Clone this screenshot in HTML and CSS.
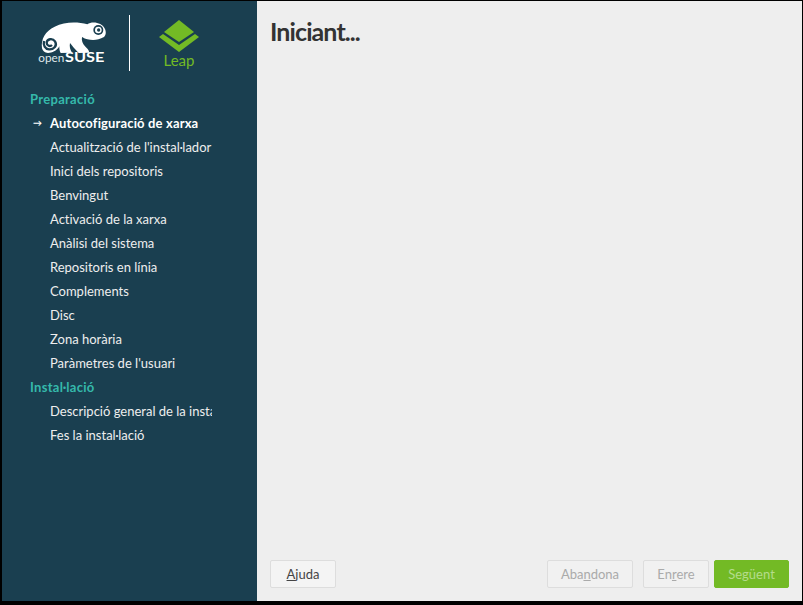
FILE: index.html
```html
<!DOCTYPE html>
<html lang="ca">
<head>
<meta charset="UTF-8">
<title>Iniciant...</title>
<link rel="stylesheet" href="styles.css">
</head>
<body>
<div class="window">
    <aside class="sidebar">
        <div class="logos">
            <svg class="logo-suse" width="90" height="60" viewBox="0 0 270 180">
                <path class="white" d="M36 100 C32 72 46 48 74 35 C104 20 142 20 172 28 C186 18 216 22 225 42 C230 55 226 62 222 66 C205 76 188 76 172 73 C164 71 160 68 156 66 C154 76 158 86 165 94 C171 100 176 104 178 113 L146 114 C134 102 126 92 120 84 C118 94 120 104 126 113 L92 114 C88 108 88 100 88 94 C80 108 66 114 54 114 C44 114 38 108 36 100 Z"/>
                <circle class="eye" cx="205" cy="45" r="15"/>
                <circle class="white" cx="205" cy="45" r="10"/>
                <circle class="eye" cx="206" cy="45" r="5"/>
                <path class="spiral" d="M66 90 C60 96 50 92 50 83 C51 71 68 69 75 79 C83 92 72 104 57 103 C45 102 39 91 42 78"/>
                <text class="open" x="25" y="141" textLength="78" lengthAdjust="spacingAndGlyphs">open</text>
                <text class="suse" x="105" y="141" textLength="118" lengthAdjust="spacingAndGlyphs">SUSE</text>
            </svg>
            <div class="divider"></div>
            <div class="leap">
                <svg width="42" height="33" viewBox="0 0 42 33">
                    <path class="green" d="M21 1 L36 13 L21 23 L6 13 Z"/>
                    <path class="green" d="M5 15 L21 26 L37 15 L41 18 L21 33 L1 18 Z"/>
                </svg>
                <div class="leap-name">Leap</div>
            </div>
        </div>
        <ul class="steps">
            <li class="group">Preparació</li>
            <li class="step current"><span class="arrow">→</span>Autocofiguració de xarxa</li>
            <li class="step">Actualització de l'instal·lador</li>
            <li class="step">Inici dels repositoris</li>
            <li class="step">Benvingut</li>
            <li class="step">Activació de la xarxa</li>
            <li class="step">Anàlisi del sistema</li>
            <li class="step">Repositoris en línia</li>
            <li class="step">Complements</li>
            <li class="step">Disc</li>
            <li class="step">Zona horària</li>
            <li class="step">Paràmetres de l'usuari</li>
            <li class="group">Instal·lació</li>
            <li class="step">Descripció general de la instal·lació</li>
            <li class="step">Fes la instal·lació</li>
        </ul>
    </aside>
    <main class="content">
        <h1 class="title">Iniciant...</h1>
        <div class="buttons">
            <button class="btn"><u>A</u>juda</button>
            <div class="spacer"></div>
            <button class="btn off abandon">Aba<u>n</u>dona</button>
            <button class="btn off back">En<u>r</u>ere</button>
            <button class="btn next">Se<u>g</u>üent</button>
        </div>
    </main>
</div>
</body>
</html>
```
FILE: styles.css
```css
html, body {
    margin: 0;
    height: 100%;
    background: #000;
}

body {
    padding: 1px 1px 4px 2px;
    box-sizing: border-box;
    overflow: hidden;
    font-family: "Lato", sans-serif;
    font-variant-ligatures: none;
}

.window {
    display: flex;
    height: 100%;
}

.sidebar {
    width: 255px;
    flex: none;
    background: #1a3f50;
    color: #eee;
}

.logos {
    display: flex;
    height: 70px;
    padding-top: 14px;
    padding-left: 28px;
    margin-bottom: 2px;
}

.logo-suse {
    display: block;
}

.white { fill: #fff; }
.eye { fill: #1a3f50; }
.green { fill: #73ba25; }
.spiral { fill: none; stroke: #1a3f50; stroke-width: 7; }

.open {
    font-size: 36px;
    fill: #dfe7ea;
    font-family: "Lato", sans-serif;
}

.suse {
    font-size: 42px;
    font-weight: 700;
    fill: #fff;
    font-family: "Lato", sans-serif;
}

.divider {
    width: 1px;
    height: 56px;
    background: #fff;
    margin-left: 9px;
}

.leap {
    margin-left: 28px;
    width: 42px;
    padding-top: 4px;
    text-align: center;
}

.leap svg {
    display: block;
}

.leap-name {
    font-size: 15px;
    color: #73ba25;
    line-height: 20px;
    margin-top: -2px;
}

.steps {
    list-style: none;
    margin: 0;
    padding: 0 0 0 28px;
    width: 182px;
    font-size: 13px;
}

.steps li {
    height: 24px;
    line-height: 24px;
    white-space: nowrap;
    overflow: hidden;
}

.group {
    color: #35b9ab;
    font-weight: 700;
    letter-spacing: 0.3px;
}

.step {
    position: relative;
    padding-left: 20px;
}

.current {
    font-weight: 700;
    color: #fff;
    letter-spacing: 0.15px;
}

.arrow {
    position: absolute;
    left: 3px;
    font-size: 9px;
}

.content {
    flex: 1;
    display: flex;
    flex-direction: column;
    background: #eee;
    padding: 0 13px 13px;
}

.title {
    flex: 1;
    margin: 15px 0 0;
    font-size: 25px;
    line-height: 30px;
    font-weight: 700;
    color: #333;
    letter-spacing: -0.9px;
}

.buttons {
    display: flex;
    height: 28px;
}

.spacer {
    flex: 1;
}

.btn {
    width: 66px;
    height: 28px;
    padding: 0;
    border: 1px solid #ddd;
    border-radius: 2px;
    background: #f4f4f4;
    color: #444;
    font: 13px "Lato", sans-serif;
}

.off {
    color: #aaa;
    background: #f1f1f1;
}

.abandon {
    width: 86px;
}

.back {
    margin-left: 10px;
}

.next {
    width: 75px;
    margin-left: 5px;
    background: #73ba25;
    border-color: #73ba25;
    color: #b5dc8c;
}
```
